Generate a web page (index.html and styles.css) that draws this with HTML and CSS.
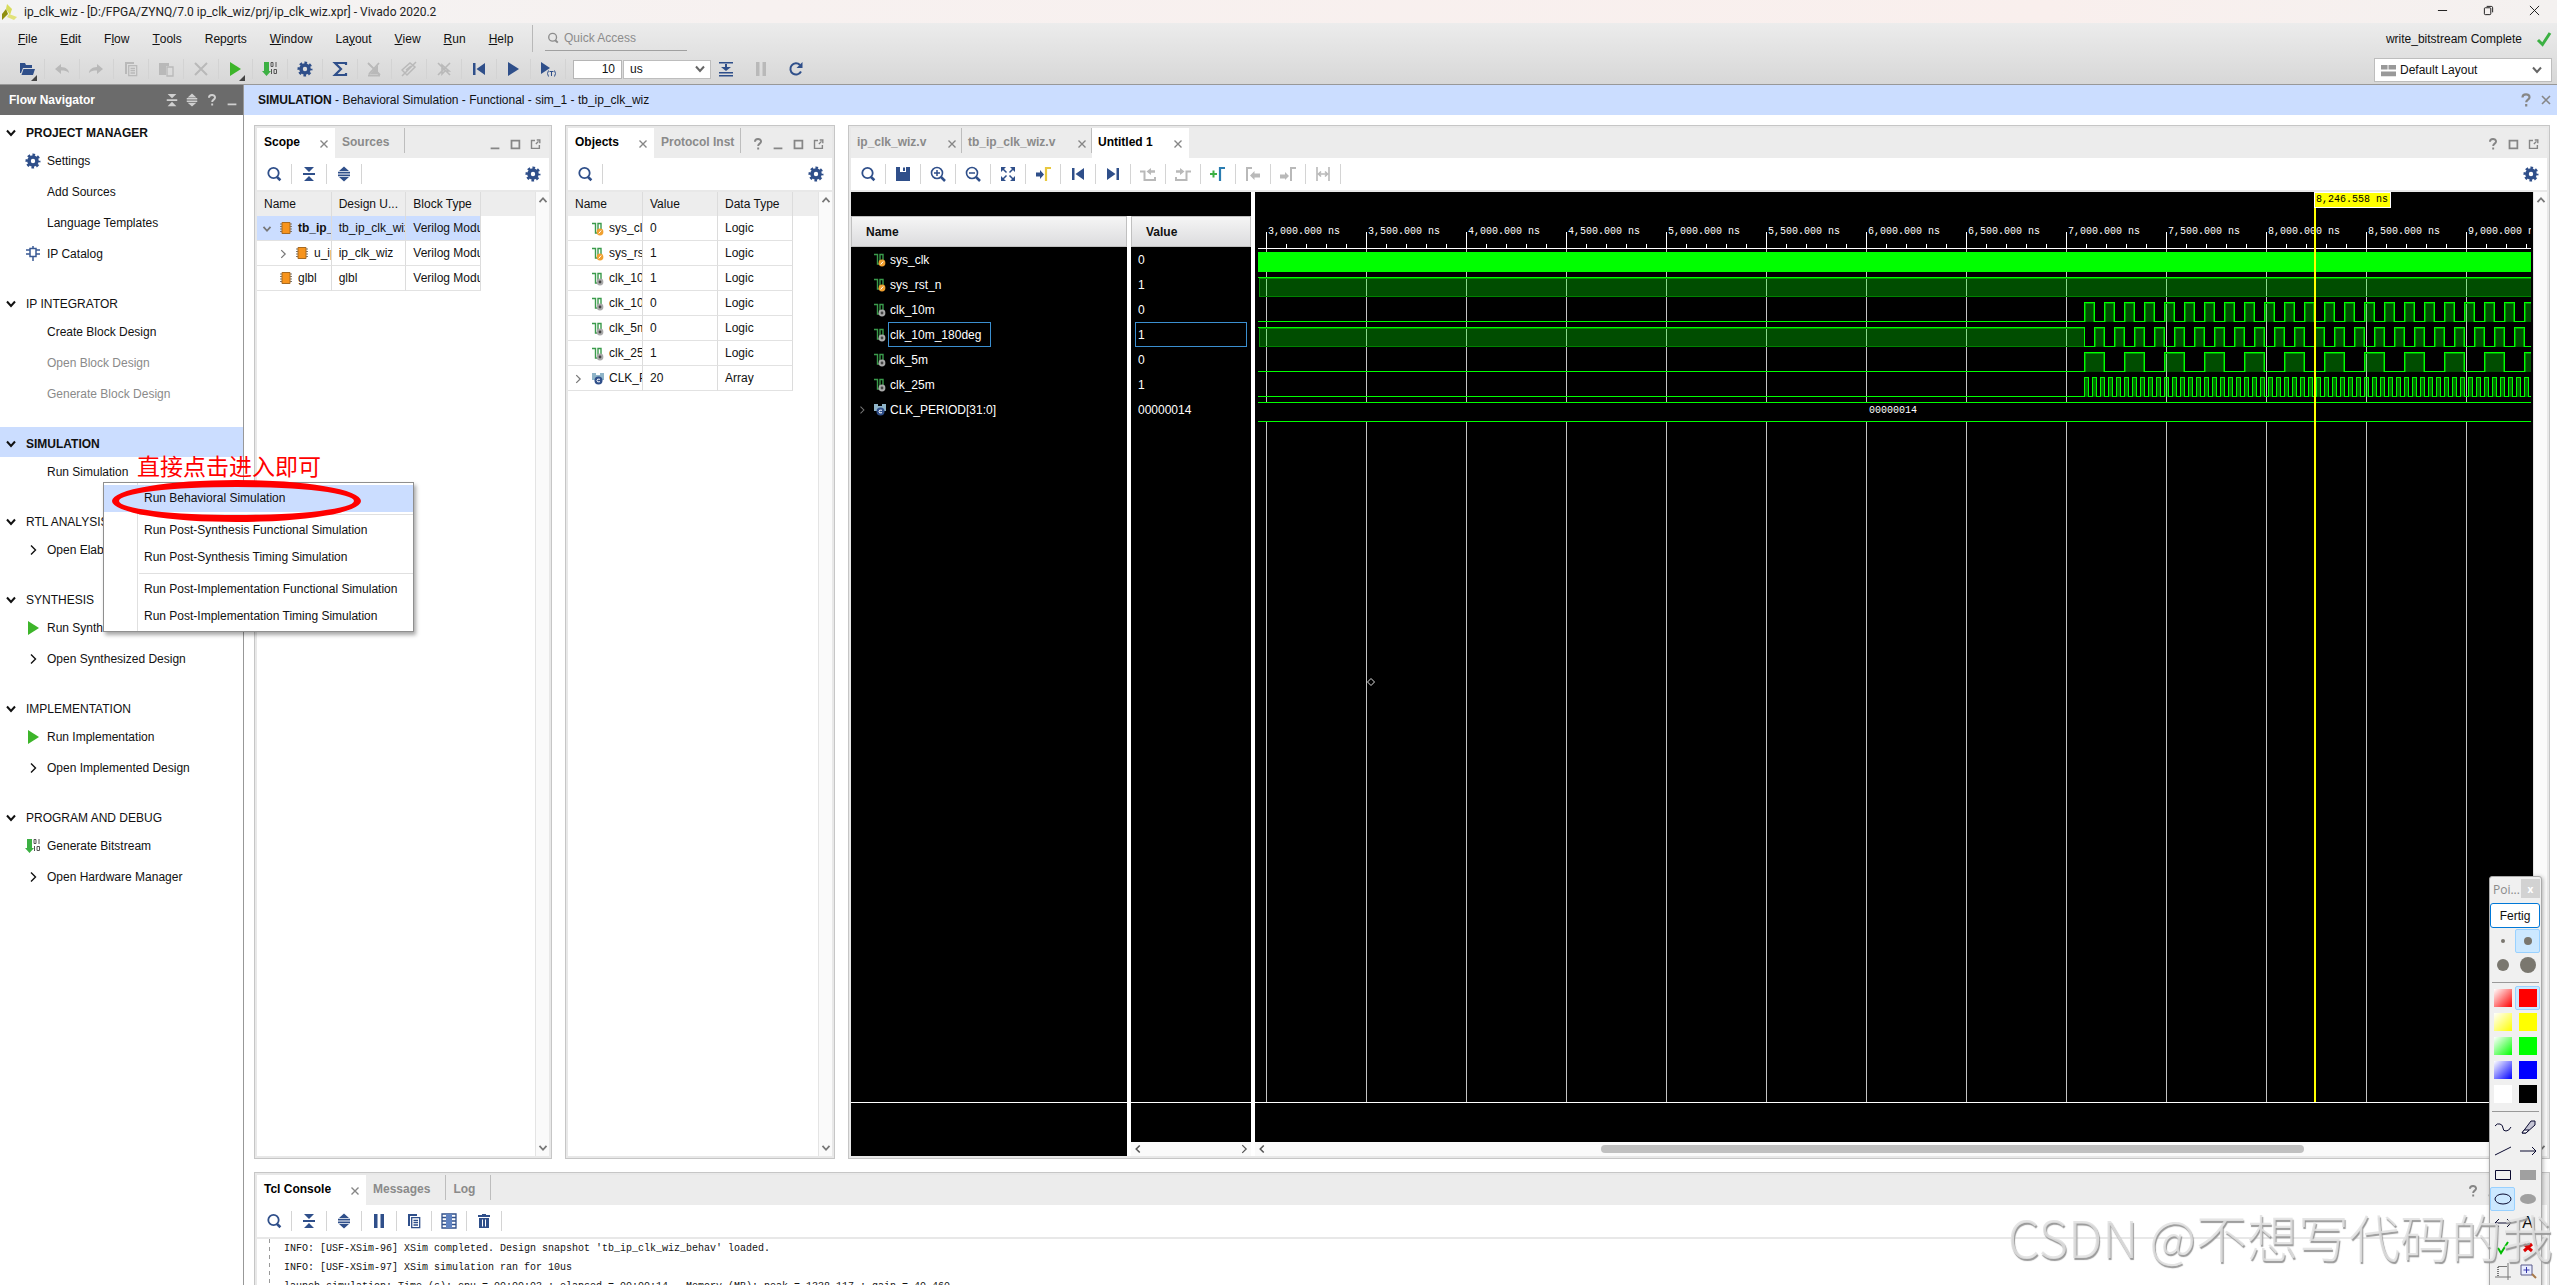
FILE: index.html
```html
<!DOCTYPE html>
<html lang="en">
<head>
<meta charset="utf-8">
<title>ip_clk_wiz - Vivado 2020.2</title>
<link rel="stylesheet" href="styles.css">
</head>
<body>
<svg class="sprite" aria-hidden="true">
  <symbol id="i-search" viewBox="0 0 16 16"><circle cx="7.5" cy="7" r="5.2" fill="none" stroke="currentColor" stroke-width="1.8"/><path d="M11 11l3.4 3.2" stroke="currentColor" stroke-width="2.6"/></symbol>
  <symbol id="i-collapse" viewBox="0 0 16 16"><path d="M3 1h10L8 6zM3 15h10L8 10zM2 7h12v2H2z" fill="currentColor"/></symbol>
  <symbol id="i-expand" viewBox="0 0 16 16"><path d="M3 5h10L8 .5zM3 11h10L8 15.500zM2 5.800h12v1.600H2zM2 8.600h12v1.600H2z" fill="currentColor"/></symbol>
  <symbol id="i-gear" viewBox="0 0 16 16"><circle cx="8" cy="8" r="4" fill="none" stroke="currentColor" stroke-width="3.600"/><circle cx="8" cy="8" r="6.200" fill="none" stroke="currentColor" stroke-width="2.600" stroke-dasharray="2.600 2.270" stroke-dashoffset="1.300"/></symbol>
  <symbol id="i-help" viewBox="0 0 16 16"><path d="M4.500 5.500C4.500 1.300 11.500 1.300 11.500 5.200 11.500 7.600 8.200 7.600 8.200 10.300M8.200 12v2.400" fill="none" stroke="currentColor" stroke-width="2.200"/></symbol>
  <symbol id="i-min" viewBox="0 0 16 16"><path d="M3 12h10v2H3z" fill="currentColor"/></symbol>
  <symbol id="i-max" viewBox="0 0 16 16"><path d="M4 4h9v9H4z" fill="none" stroke="currentColor" stroke-width="2"/></symbol>
  <symbol id="i-pop" viewBox="0 0 16 16"><path d="M8 4H4v9h9V9M9 8l3-3M10 3.500h3.500V7" fill="none" stroke="currentColor" stroke-width="1.600"/></symbol>
  <symbol id="i-x" viewBox="0 0 16 16"><path d="M4 4l8 8M12 4l-8 8" stroke="currentColor" stroke-width="1.600"/></symbol>
  <symbol id="i-down" viewBox="0 0 16 16"><path d="M4 5.500l4 4.500 4-4.500" fill="none" stroke="currentColor" stroke-width="2"/></symbol>
  <symbol id="i-up" viewBox="0 0 16 16"><path d="M4 10.500l4-4.500 4 4.500" fill="none" stroke="currentColor" stroke-width="2"/></symbol>
  <symbol id="i-right" viewBox="0 0 16 16"><path d="M6 3.500l4.500 4.500L6 12.500" fill="none" stroke="currentColor" stroke-width="1.400"/></symbol>
  <symbol id="i-left" viewBox="0 0 16 16"><path d="M10 4L6 8l4 4" fill="none" stroke="currentColor" stroke-width="1.800"/></symbol>
  <symbol id="i-open" viewBox="0 0 16 16"><path d="M1 2h5l1 2h6v3H4L2 12 1 12z" fill="#2f4f8a"/><path d="M4.500 8H16l-2 6H2.500z" fill="#2f4f8a"/></symbol>
  <symbol id="i-undo" viewBox="0 0 16 16"><path d="M1 8l6-5v3c5 0 8 3 8 6-2-2-4-2.500-8-2.500V13z" fill="currentColor"/></symbol>
  <symbol id="i-redo" viewBox="0 0 16 16"><path d="M15 8L9 3v3c-5 0-8 3-8 6 2-2 4-2.500 8-2.500V13z" fill="currentColor"/></symbol>
  <symbol id="i-copy" viewBox="0 0 16 16"><path d="M2 1h9v2H4v10H2z" fill="currentColor"/><path d="M5.700 4.700h8v10h-8zM7.500 7.500h4.500M7.500 9.700h4.500M7.500 12h4.500" fill="none" stroke="currentColor" stroke-width="1.300"/></symbol>
  <symbol id="i-paste" viewBox="0 0 16 16"><path d="M1 2h10v3H8v9H1z" fill="currentColor"/><path d="M9 6h6v9H9z" fill="none" stroke="currentColor" stroke-width="1.300"/></symbol>
  <symbol id="i-cross" viewBox="0 0 16 16"><path d="M2 2l12 12M14 2L2 14" stroke="currentColor" stroke-width="2"/></symbol>
  <symbol id="i-play" viewBox="0 0 16 16"><path d="M3 1l11 7-11 7z" fill="currentColor"/></symbol>
  <symbol id="i-bits" viewBox="0 0 16 16"><path d="M2 1h5v9h2l-4.500 5L0 10h2z" fill="#3cb043"/><path d="M9 1.500h2v4H9zM14 1v5M9.500 8v5M12 8.500h2.500v4H12z" fill="none" stroke="#555"/></symbol>
  <symbol id="i-sigma" viewBox="0 0 16 16"><path d="M14 4V2H3l6 6-6 6h11v-2" fill="none" stroke="currentColor" stroke-width="2.200"/></symbol>
  <symbol id="i-probe" viewBox="0 0 16 16"><path d="M4 13L12 4v9z" fill="currentColor"/><path d="M2 2l12 12M13 2L3 13M2 14.500h12" stroke="currentColor" stroke-width="1.800" fill="none"/></symbol>
  <symbol id="i-clip" viewBox="0 0 16 16"><path d="M1 9l8-7 5 4-8 8zM5 9l5-4M1 15L15 1" stroke="currentColor" stroke-width="1.500" fill="none"/></symbol>
  <symbol id="i-nocur" viewBox="0 0 16 16"><path d="M2 2l12 12M14 2L2 14M6 4v9l3-3h4z" stroke="currentColor" stroke-width="1.600" fill="none"/></symbol>
  <symbol id="i-first" viewBox="0 0 16 16"><path d="M2 2h2.500v12H2zM14 2v12L5.500 8z" fill="currentColor"/></symbol>
  <symbol id="i-last" viewBox="0 0 16 16"><path d="M14 2h-2.500v12H14zM2 2v12l8.500-6z" fill="currentColor"/></symbol>
  <symbol id="i-playt" viewBox="0 0 16 16"><path d="M1 1l9 6-9 6z" fill="currentColor"/><path d="M8.500 9.500q-2 3 0 6M14.500 9.500q2 3 0 6M9.500 10.500h4M11.500 10.500v4.500" fill="none" stroke="currentColor"/></symbol>
  <symbol id="i-step" viewBox="0 0 16 16"><path d="M1 1h14v1.500H1zM1 11h14v1.500H1zM1 14h14v1.500H1zM7 3h2v3h4l-5 4-5-4h4z" fill="currentColor"/></symbol>
  <symbol id="i-pause" viewBox="0 0 16 16"><path d="M3 1h3.500v14H3zM9.500 1H13v14H9.500z" fill="currentColor"/></symbol>
  <symbol id="i-refresh" viewBox="0 0 16 16"><path d="M13 10.500A5.600 5.600 0 1 1 12 4" fill="none" stroke="currentColor" stroke-width="2"/><path d="M14.500 1v6h-6z" fill="currentColor"/></symbol>
  <symbol id="i-layout" viewBox="0 0 16 16"><path d="M0 2h7v5H0zM8 2h8v5H8zM0 9h16v5H0z" fill="#999"/></symbol>
  <symbol id="i-check" viewBox="0 0 16 16"><path d="M2 9l4.500 4.500L14 2" fill="none" stroke="#3cb043" stroke-width="3"/></symbol>
  <symbol id="i-ip" viewBox="0 0 16 16"><path d="M5 2.500h6v8H5zM1 4h4M1 8h4M11 4h4M11 8h4M8 10.500V15M8 0v2" fill="none" stroke="#3a5a94" stroke-width="1.500"/></symbol>
  <symbol id="i-chip" viewBox="0 0 12 12"><path d="M0 2h12M0 4.500h12M0 7h12M0 9.500h12" stroke="#777"/><path d="M2 .5h8v11H2z" fill="#f7941d" stroke="#a86a20"/></symbol>
  <symbol id="i-in" viewBox="0 0 12 14"><path d="M0 1.500h3.500v9.500H6V1.500h3V8" fill="none" stroke="#3a9b4b" stroke-width="1.400"/><circle cx="8" cy="10" r="3.400" fill="#f0a030"/><path d="M6.700 11.500l2.500-3" stroke="#fff"/></symbol>
  <symbol id="i-out" viewBox="0 0 12 14"><path d="M0 1.500h3.500v9.500H6V1.500h3V8" fill="none" stroke="#3a9b4b" stroke-width="1.400"/><circle cx="8" cy="10" r="3.400" fill="#aaa"/><circle cx="8" cy="10" r="1.400" fill="#444"/></symbol>
  <symbol id="i-const" viewBox="0 0 12 14"><path d="M0 1h4v2h4V1h4v7H0z" fill="#8fb4c8"/><circle cx="6.500" cy="8.500" r="4" fill="#2f4f8a"/><path d="M8 7.300q-3-1-3 1.200t3 1.200" fill="none" stroke="#fff"/></symbol>
  <symbol id="i-save" viewBox="0 0 16 16"><path d="M1 1h14v14H1z" fill="#2f4f8a"/><path d="M5 1h6v5H5z" fill="#fff"/><path d="M8 1.500h2V5H8z" fill="#2f4f8a"/></symbol>
  <symbol id="i-zin" viewBox="0 0 16 16"><circle cx="7" cy="7" r="5.500" fill="none" stroke="currentColor" stroke-width="1.600"/><path d="M11 11l4 4" stroke="currentColor" stroke-width="2.500"/><path d="M4 7h6M7 4v6" stroke="currentColor" stroke-width="1.500"/></symbol>
  <symbol id="i-zout" viewBox="0 0 16 16"><circle cx="7" cy="7" r="5.500" fill="none" stroke="currentColor" stroke-width="1.600"/><path d="M11 11l4 4" stroke="currentColor" stroke-width="2.500"/><path d="M4 7h6" stroke="currentColor" stroke-width="1.500"/></symbol>
  <symbol id="i-fit" viewBox="0 0 16 16"><path d="M1 1h5L1 6zM15 1v5l-5-5zM1 15v-5l5 5zM15 15h-5l5-5z" fill="currentColor"/><path d="M3 3l3.500 3.500M13 3L9.500 6.500M3 13l3.500-3.500M13 13L9.500 9.500" stroke="currentColor" stroke-width="1.500"/></symbol>
  <symbol id="i-goto" viewBox="0 0 16 16"><path d="M1 6.500h4V4l4 4.500L5 13v-2.500H1z" fill="#2f4f8a"/><path d="M11 15V2h5" fill="none" stroke="#e8c840" stroke-width="2.200"/></symbol>
  <symbol id="i-prevt" viewBox="0 0 16 16"><path d="M0 5.500h4.500V14H15v-3" fill="none" stroke="currentColor" stroke-width="2"/><path d="M6.500 5.500L11 2v2.200h4v2.600h-4V9z" fill="currentColor"/></symbol>
  <symbol id="i-nextt" viewBox="0 0 16 16"><path d="M16 5.500h-4.500V14H1v-3" fill="none" stroke="currentColor" stroke-width="2"/><path d="M9.500 5.500L5 2v2.200H1v2.600h4V9z" fill="currentColor"/></symbol>
  <symbol id="i-addm" viewBox="0 0 16 16"><path d="M0 8h7M3.500 4.500v7" stroke="#3cb043" stroke-width="2"/><path d="M10 15V2h5" fill="none" stroke="#2a7cb0" stroke-width="2.200"/></symbol>
  <symbol id="i-prevm" viewBox="0 0 16 16"><path d="M2 15V2h5" fill="none" stroke="currentColor" stroke-width="2"/><path d="M5 9.500L9.500 5v2.500H15v4H9.500V14z" fill="currentColor"/></symbol>
  <symbol id="i-nextm" viewBox="0 0 16 16"><path d="M11 15V2h5" fill="none" stroke="currentColor" stroke-width="2"/><path d="M9 10L5 6v2.500H0v4h5V14z" fill="currentColor"/></symbol>
  <symbol id="i-swap" viewBox="0 0 16 16"><path d="M2 1v14M14 1v14M3.500 8h9M6 5.500L3.500 8 6 10.500M10 5.500L12.500 8 10 10.500" fill="none" stroke="currentColor" stroke-width="1.600"/></symbol>
  <symbol id="i-cols" viewBox="0 0 16 16"><path d="M1 1h14v14H1zM1 4.500h14M1 8h14M1 11.500h14" fill="none" stroke="#2f4f8a" stroke-width="1.300"/><path d="M5 1h6v14H5z" fill="#5f82c0"/></symbol>
  <symbol id="i-trash" viewBox="0 0 16 16"><path d="M2 2h12v2H2zM6 1h4v1H6zM3 5h10v10H3z" fill="currentColor"/><path d="M6.500 6.500v7M9.500 6.500v7" stroke="#fff"/></symbol>
</svg>

<div class="app">
  <header class="titlebar">
    <svg class="logo" viewBox="0 0 18 18"><path d="M7 1l5 5-2 6-4-6z" fill="#d8dc5a"/><path d="M6 6l2 5-6 6V11z" fill="#8f8f10"/><path d="M9 11l8 3-3 3-7-3z" fill="#e2e27a"/></svg>
    <span class="title">ip_clk_wiz - [D:/FPGA/ZYNQ/7.0 ip_clk_wiz/prj/ip_clk_wiz.xpr] - Vivado 2020.2</span>
    <div class="winbtns">
      <button aria-label="Minimize"><svg viewBox="0 0 12 12"><path d="M1 6h10" stroke="#111"/></svg></button>
      <button aria-label="Restore"><svg viewBox="0 0 12 12" fill="none" stroke="#111"><rect x="1.500" y="3" width="7" height="7.500" rx="1"/><path d="M4 1.500h5q1.500 0 1.500 1.500v5"/></svg></button>
      <button aria-label="Close"><svg viewBox="0 0 12 12"><path d="M1 1l10 10M11 1L1 11" stroke="#111"/></svg></button>
    </div>
  </header>

  <div class="chrome">
    <div class="chrome-left">
      <div class="menurow">
        <nav class="menubar">
          <button><u>F</u>ile</button><button><u>E</u>dit</button><button>F<u>l</u>ow</button><button><u>T</u>ools</button><button>Rep<u>o</u>rts</button><button><u>W</u>indow</button><button>La<u>y</u>out</button><button><u>V</u>iew</button><button><u>R</u>un</button><button><u>H</u>elp</button>
        </nav>
        <label class="quick"><svg class="ic12"><use href="#i-search"/></svg><input type="text" placeholder="Quick Access" aria-label="Quick Access"></label>
      </div>
      <div class="toolrow">
        <div class="maintools">
          <button aria-label="Open" class="more"><svg><use href="#i-open"/></svg></button>
          <button aria-label="Undo" disabled><svg><use href="#i-undo"/></svg></button>
          <button aria-label="Redo" disabled><svg><use href="#i-redo"/></svg></button>
          <button aria-label="Copy" disabled><svg><use href="#i-copy"/></svg></button>
          <button aria-label="Paste" disabled><svg><use href="#i-paste"/></svg></button>
          <button aria-label="Delete" disabled><svg><use href="#i-cross"/></svg></button>
          <button aria-label="Run" class="more go"><svg><use href="#i-play"/></svg></button>
          <button aria-label="Generate Bitstream"><svg><use href="#i-bits"/></svg></button>
          <button aria-label="Settings"><svg><use href="#i-gear"/></svg></button>
          <button aria-label="Report"><svg><use href="#i-sigma"/></svg></button>
          <button aria-label="Remove probe" disabled><svg><use href="#i-probe"/></svg></button>
          <button aria-label="Detach" disabled><svg><use href="#i-clip"/></svg></button>
          <button aria-label="Clear selection" disabled><svg><use href="#i-nocur"/></svg></button>
          <button aria-label="Restart"><svg><use href="#i-first"/></svg></button>
          <button aria-label="Run all"><svg><use href="#i-play"/></svg></button>
          <button aria-label="Run for time"><svg><use href="#i-playt"/></svg></button>
        </div>
        <input class="timebox" type="text" value="10" aria-label="Run time">
        <div class="selectbox unit"><select aria-label="Time unit"><option>us</option></select><svg><use href="#i-down"/></svg></div>
        <div class="endtools">
          <button aria-label="Step"><svg><use href="#i-step"/></svg></button>
          <button aria-label="Break" disabled><svg><use href="#i-pause"/></svg></button>
          <button aria-label="Relaunch"><svg><use href="#i-refresh"/></svg></button>
        </div>
      </div>
    </div>
    <div class="chrome-right">
      <div class="status">write_bitstream Complete <svg><use href="#i-check"/></svg></div>
      <div class="selectbox layout"><svg class="lead"><use href="#i-layout"/></svg><select aria-label="Layout"><option>Default Layout</option></select><svg><use href="#i-down"/></svg></div>
    </div>
  </div>

  <div class="body">
    <aside class="flow">
      <div class="flowhead"><h2>Flow Navigator</h2><span class="tinybtns">
        <button aria-label="Collapse"><svg><use href="#i-collapse"/></svg></button><button aria-label="Expand"><svg><use href="#i-expand"/></svg></button><button aria-label="Help"><svg><use href="#i-help"/></svg></button><button aria-label="Minimize"><svg><use href="#i-min"/></svg></button></span></div>
      <div class="flowbody">
        <section><h3 class="strong"><svg><use href="#i-down"/></svg>PROJECT MANAGER</h3>
          <button><svg class="blue"><use href="#i-gear"/></svg>Settings</button>
          <button><i></i>Add Sources</button>
          <button><i></i>Language Templates</button>
          <button><svg><use href="#i-ip"/></svg>IP Catalog</button></section>
        <section><h3><svg><use href="#i-down"/></svg>IP INTEGRATOR</h3>
          <button><i></i>Create Block Design</button>
          <button disabled><i></i>Open Block Design</button>
          <button disabled><i></i>Generate Block Design</button></section>
        <section><h3 class="strong current"><svg><use href="#i-down"/></svg>SIMULATION</h3>
          <button><i></i>Run Simulation</button></section>
        <section><h3><svg><use href="#i-down"/></svg>RTL ANALYSIS</h3>
          <button><svg><use href="#i-right"/></svg>Open Elaborated Design</button></section>
        <section><h3><svg><use href="#i-down"/></svg>SYNTHESIS</h3>
          <button><svg class="green"><use href="#i-play"/></svg>Run Synthesis</button>
          <button><svg><use href="#i-right"/></svg>Open Synthesized Design</button></section>
        <section><h3><svg><use href="#i-down"/></svg>IMPLEMENTATION</h3>
          <button><svg class="green"><use href="#i-play"/></svg>Run Implementation</button>
          <button><svg><use href="#i-right"/></svg>Open Implemented Design</button></section>
        <section><h3><svg><use href="#i-down"/></svg>PROGRAM AND DEBUG</h3>
          <button><svg><use href="#i-bits"/></svg>Generate Bitstream</button>
          <button><svg><use href="#i-right"/></svg>Open Hardware Manager</button></section>
      </div>
    </aside>

    <div class="work">
      <div class="workhead"><p><b>SIMULATION</b> - Behavioral Simulation - Functional - sim_1 - tb_ip_clk_wiz</p><span class="tinybtns">
        <button aria-label="Help"><svg><use href="#i-help"/></svg></button><button aria-label="Close"><svg><use href="#i-x"/></svg></button></span></div>
      <main class="panels">
        <div class="toppanels">
          <section class="panel scope">
            <div class="tabs"><button class="tab on">Scope<svg><use href="#i-x"/></svg></button><button class="tab lone">Sources</button>
              <span class="tinybtns"><button aria-label="Minimize"><svg><use href="#i-min"/></svg></button><button aria-label="Maximize"><svg><use href="#i-max"/></svg></button><button aria-label="Float"><svg><use href="#i-pop"/></svg></button></span></div>
            <div class="tools"><button aria-label="Search"><svg><use href="#i-search"/></svg></button><button aria-label="Collapse all"><svg><use href="#i-collapse"/></svg></button><button aria-label="Expand all"><svg><use href="#i-expand"/></svg></button><button class="set" aria-label="Settings"><svg><use href="#i-gear"/></svg></button></div>
            <div class="scroller">
              <div class="sheet"><table class="scopetable">
                <thead><tr><th>Name</th><th>Design U...</th><th>Block Type</th></tr></thead>
                <tbody>
                  <tr class="sel"><td class="tree"><svg class="tw"><use href="#i-down"/></svg><svg class="chip"><use href="#i-chip"/></svg><b>tb_ip_clk_wiz</b></td><td>tb_ip_clk_wiz</td><td>Verilog Module</td></tr>
                  <tr><td class="tree deep"><svg class="tw"><use href="#i-right"/></svg><svg class="chip"><use href="#i-chip"/></svg>u_ip_clk_wiz</td><td>ip_clk_wiz</td><td>Verilog Module</td></tr>
                  <tr><td class="tree"><i class="tw"></i><svg class="chip"><use href="#i-chip"/></svg>glbl</td><td>glbl</td><td>Verilog Module</td></tr>
                </tbody></table></div>
              <div class="vbar"><svg><use href="#i-up"/></svg><svg><use href="#i-down"/></svg></div>
            </div>
          </section>

          <section class="panel objects">
            <div class="tabs"><button class="tab on">Objects<svg><use href="#i-x"/></svg></button><button class="tab tight">Protocol Inst</button>
              <span class="tinybtns"><button aria-label="Help"><svg><use href="#i-help"/></svg></button><button aria-label="Minimize"><svg><use href="#i-min"/></svg></button><button aria-label="Maximize"><svg><use href="#i-max"/></svg></button><button aria-label="Float"><svg><use href="#i-pop"/></svg></button></span></div>
            <div class="tools"><button aria-label="Search"><svg><use href="#i-search"/></svg></button><button class="set" aria-label="Settings"><svg><use href="#i-gear"/></svg></button></div>
            <div class="scroller">
              <div class="sheet"><table class="objtable">
                <thead><tr><th>Name</th><th>Value</th><th>Data Type</th></tr></thead>
                <tbody>
                  <tr><td class="tree"><i class="tw"></i><svg class="sig"><use href="#i-in"/></svg>sys_clk</td><td>0</td><td>Logic</td></tr>
                  <tr><td class="tree"><i class="tw"></i><svg class="sig"><use href="#i-in"/></svg>sys_rst_n</td><td>1</td><td>Logic</td></tr>
                  <tr><td class="tree"><i class="tw"></i><svg class="sig"><use href="#i-out"/></svg>clk_10m</td><td>1</td><td>Logic</td></tr>
                  <tr><td class="tree"><i class="tw"></i><svg class="sig"><use href="#i-out"/></svg>clk_10m_180deg</td><td>0</td><td>Logic</td></tr>
                  <tr><td class="tree"><i class="tw"></i><svg class="sig"><use href="#i-out"/></svg>clk_5m</td><td>0</td><td>Logic</td></tr>
                  <tr><td class="tree"><i class="tw"></i><svg class="sig"><use href="#i-out"/></svg>clk_25m</td><td>1</td><td>Logic</td></tr>
                  <tr><td class="tree"><svg class="tw"><use href="#i-right"/></svg><svg class="sig"><use href="#i-const"/></svg>CLK_PERIOD</td><td>20</td><td>Array</td></tr>
                </tbody></table></div>
              <div class="vbar"><svg><use href="#i-up"/></svg><svg><use href="#i-down"/></svg></div>
            </div>
          </section>

          <section class="panel wave">
            <div class="tabs"><button class="tab file">ip_clk_wiz.v<svg><use href="#i-x"/></svg></button><button class="tab file">tb_ip_clk_wiz.v<svg><use href="#i-x"/></svg></button><button class="tab file on">Untitled 1<svg><use href="#i-x"/></svg></button>
              <span class="tinybtns"><button aria-label="Help"><svg><use href="#i-help"/></svg></button><button aria-label="Maximize"><svg><use href="#i-max"/></svg></button><button aria-label="Float"><svg><use href="#i-pop"/></svg></button></span></div>
            <div class="tools"><button aria-label="Search"><svg><use href="#i-search"/></svg></button><button aria-label="Save"><svg><use href="#i-save"/></svg></button><button aria-label="Zoom in"><svg><use href="#i-zin"/></svg></button><button aria-label="Zoom out"><svg><use href="#i-zout"/></svg></button><button aria-label="Zoom fit"><svg><use href="#i-fit"/></svg></button><button aria-label="Go to cursor"><svg><use href="#i-goto"/></svg></button><button aria-label="First"><svg><use href="#i-first"/></svg></button><button aria-label="Last"><svg><use href="#i-last"/></svg></button><button disabled aria-label="Previous transition"><svg><use href="#i-prevt"/></svg></button><button disabled aria-label="Next transition"><svg><use href="#i-nextt"/></svg></button><button aria-label="Add marker"><svg><use href="#i-addm"/></svg></button><button disabled aria-label="Previous marker"><svg><use href="#i-prevm"/></svg></button><button disabled aria-label="Next marker"><svg><use href="#i-nextm"/></svg></button><button disabled aria-label="Swap cursors"><svg><use href="#i-swap"/></svg></button><button class="set" aria-label="Settings"><svg><use href="#i-gear"/></svg></button></div>
            <div class="wavebody">
              <div class="signals">
                <div class="sigcols">
                  <div class="sigcol names">
                    <h4>Name</h4>
                    <ul>
                      <li><svg class="sig"><use href="#i-in"/></svg><span>sys_clk</span></li>
                      <li><svg class="sig"><use href="#i-in"/></svg><span>sys_rst_n</span></li>
                      <li><svg class="sig"><use href="#i-out"/></svg><span>clk_10m</span></li>
                      <li><svg class="sig"><use href="#i-out"/></svg><span class="picked">clk_10m_180deg</span></li>
                      <li><svg class="sig"><use href="#i-out"/></svg><span>clk_5m</span></li>
                      <li><svg class="sig"><use href="#i-out"/></svg><span>clk_25m</span></li>
                      <li class="bus"><svg class="tw"><use href="#i-right"/></svg><svg class="sig"><use href="#i-const"/></svg><span>CLK_PERIOD[31:0]</span></li>
                    </ul>
                    <div class="under tall"></div>
                  </div>
                  <div class="sigcol values">
                    <h4>Value</h4>
                    <ul><li>0</li><li>1</li><li>0</li><li class="picked">1</li><li>0</li><li>1</li><li>00000014</li></ul>
                    <div class="under"></div>
                    <div class="hbar"><svg><use href="#i-left"/></svg><svg><use href="#i-right"/></svg></div>
                  </div>
                </div>
              </div>
              <div class="plotcol">
                <svg class="plot" shape-rendering="crispEdges">
                  <defs>
                    <pattern id="grid" patternUnits="userSpaceOnUse" x="11" y="0" width="100" height="100"><rect width="1" height="100" fill="#c4c4c4"/></pattern>
                    <pattern id="major" patternUnits="userSpaceOnUse" x="11" y="40" width="100" height="20"><rect width="1" height="20" fill="#fff"/></pattern>
                    <pattern id="minor" patternUnits="userSpaceOnUse" x="11" y="52" width="20" height="10"><rect width="1" height="10" fill="#fff"/></pattern>
                    <pattern id="c10" patternUnits="userSpaceOnUse" x="829" y="110" width="20" height="20"><path d="M0 0h11v20H0z" fill="#0f0" fill-opacity=".3"/><path d="M1 1h9v1H1zM9 2h1v18H9zM1 2h1v18H1z" fill="#090"/><path d="M0 0h11v1H0zM0 0h1v20H0zM10 0h1v20h-1zM10 19h10v1H10z" fill="#0f0"/></pattern>
                    <pattern id="c10b" patternUnits="userSpaceOnUse" x="839" y="135" width="20" height="20"><path d="M0 0h11v20H0z" fill="#0f0" fill-opacity=".3"/><path d="M1 1h9v1H1zM9 2h1v18H9zM1 2h1v18H1z" fill="#090"/><path d="M0 0h11v1H0zM0 0h1v20H0zM10 0h1v20h-1zM10 19h10v1H10z" fill="#0f0"/></pattern>
                    <pattern id="c5" patternUnits="userSpaceOnUse" x="829" y="160" width="40" height="20"><path d="M0 0h21v20H0z" fill="#0f0" fill-opacity=".3"/><path d="M1 1h19v1H1zM19 2h1v18h-1zM1 2h1v18H1z" fill="#090"/><path d="M0 0h21v1H0zM0 0h1v20H0zM20 0h1v20h-1zM20 19h20v1H20z" fill="#0f0"/></pattern>
                    <pattern id="c25" patternUnits="userSpaceOnUse" x="829" y="185" width="8" height="20"><path d="M0 0h5v20H0z" fill="#0f0" fill-opacity=".4"/><path d="M0 0h5v1H0zM0 0h1v20H0zM4 0h1v20H4zM4 19h4v1H4z" fill="#0f0"/></pattern>
                  </defs>
                  <rect class="gridarea" x="11" y="56" width="100%" fill="url(#grid)"/>
                  <rect x="3" y="40" width="100%" height="16" fill="url(#major)"/>
                  <rect x="3" y="52" width="100%" height="4" fill="url(#minor)"/>
                  <rect x="3" y="56" width="100%" height="1" fill="#fff"/>
                  <g class="ticks"><text x="13" y="42">3,000.000 ns</text><text x="113" y="42">3,500.000 ns</text><text x="213" y="42">4,000.000 ns</text><text x="313" y="42">4,500.000 ns</text><text x="413" y="42">5,000.000 ns</text><text x="513" y="42">5,500.000 ns</text><text x="613" y="42">6,000.000 ns</text><text x="713" y="42">6,500.000 ns</text><text x="813" y="42">7,000.000 ns</text><text x="913" y="42">7,500.000 ns</text><text x="1013" y="42">8,000.000 ns</text><text x="1113" y="42">8,500.000 ns</text><text x="1213" y="42">9,000.000 ns</text></g>
                  <rect x="3" y="60" width="100%" height="20" fill="#0f0"/>
                  <rect x="4" y="85" width="100%" height="20" fill="#0f0" fill-opacity=".3"/>
                  <rect x="4" y="104" width="100%" height="1" fill="#008000"/><rect x="4" y="86" width="100%" height="1" fill="#009000"/><rect x="4" y="86" width="1" height="19" fill="#009000"/>
                  <rect x="3" y="85" width="100%" height="1" fill="#0f0"/>
                  <rect x="3" y="129" width="826" height="1" fill="#0f0"/>
                  <rect x="829" y="110" width="100%" height="20" fill="url(#c10)"/>
                  <rect x="4" y="135" width="825" height="20" fill="#0f0" fill-opacity=".3"/>
                  <rect x="4" y="154" width="825" height="1" fill="#008000"/><rect x="4" y="136" width="825" height="1" fill="#009000"/><rect x="4" y="136" width="1" height="19" fill="#009000"/>
                  <rect x="3" y="135" width="827" height="1" fill="#0f0"/>
                  <rect x="829" y="135" width="100%" height="20" fill="url(#c10b)"/>
                  <rect x="3" y="179" width="826" height="1" fill="#0f0"/>
                  <rect x="829" y="160" width="100%" height="20" fill="url(#c5)"/>
                  <rect x="3" y="204" width="826" height="1" fill="#0f0"/>
                  <rect x="829" y="185" width="100%" height="20" fill="url(#c25)"/>
                  <rect x="3" y="210" width="100%" height="20" fill="#000"/>
                  <rect x="3" y="210" width="100%" height="1" fill="#0f0"/><rect x="3" y="229" width="100%" height="1" fill="#0f0"/>
                  <g class="ticks"><text x="614" y="221">00000014</text></g>
                  <rect class="base" x="0" width="100%" height="1" fill="#fff"/>
                  <path d="M116 486.500l3.500 3.500-3.500 3.500-3.500-3.500z" fill="none" stroke="#ddd" shape-rendering="auto"/>
                  <rect class="cursorline" x="1059" y="0" width="2" fill="#ff0"/>
                  <rect x="1059" y="0" width="77" height="16" fill="#fff"/><rect x="1060" y="1" width="75" height="14" fill="#ff0"/>
                  <text class="cursortext" x="1061" y="10">8,246.558 ns</text>
                </svg>
                <div class="hbar"><svg><use href="#i-left"/></svg><span class="thumb"></span><svg><use href="#i-right"/></svg></div>
              </div>
              <div class="vbar"><svg><use href="#i-up"/></svg><svg><use href="#i-down"/></svg></div>
            </div>
          </section>
        </div>

        <section class="panel console">
          <div class="tabs"><button class="tab on tcl">Tcl Console<svg><use href="#i-x"/></svg></button><button class="tab">Messages</button><button class="tab">Log</button>
            <span class="tinybtns"><button aria-label="Help"><svg><use href="#i-help"/></svg></button><button aria-label="Minimize"><svg><use href="#i-min"/></svg></button><button aria-label="Maximize"><svg><use href="#i-max"/></svg></button><button aria-label="Float"><svg><use href="#i-pop"/></svg></button></span></div>
          <div class="tools"><button aria-label="Search"><svg><use href="#i-search"/></svg></button><button aria-label="Collapse all"><svg><use href="#i-collapse"/></svg></button><button aria-label="Expand all"><svg><use href="#i-expand"/></svg></button><button aria-label="Pause output"><svg><use href="#i-pause"/></svg></button><button aria-label="Copy"><svg><use href="#i-copy"/></svg></button><button aria-label="Columns"><svg><use href="#i-cols"/></svg></button><button aria-label="Clear"><svg><use href="#i-trash"/></svg></button></div>
          <div class="log">
            <p>INFO: [USF-XSim-96] XSim completed. Design snapshot 'tb_ip_clk_wiz_behav' loaded.</p>
            <p>INFO: [USF-XSim-97] XSim simulation ran for 10us</p>
            <p>launch_simulation: Time (s): cpu = 00:00:03 ; elapsed = 00:00:14 . Memory (MB): peak = 1338.117 ; gain = 40.460</p>
          </div>
        </section>
      </main>
    </div>
  </div>

  <div class="popup" role="menu">
    <button class="hot" role="menuitem">Run Behavioral Simulation</button>
    <hr>
    <button role="menuitem">Run Post-Synthesis Functional Simulation</button>
    <button role="menuitem">Run Post-Synthesis Timing Simulation</button>
    <hr>
    <button role="menuitem">Run Post-Implementation Functional Simulation</button>
    <button role="menuitem">Run Post-Implementation Timing Simulation</button>
  </div>
  <p class="note" lang="zh">直接点击进入即可</p>
  <div class="ring"></div>

  <div class="palette">
    <div class="ptitle"><span>Poi...</span><button aria-label="Close">x</button></div>
    <button class="done">Fertig</button>
    <div class="pgrid">
      <button aria-label="Tiny"><svg viewBox="0 0 24 24"><circle cx="12" cy="12" r="2"/></svg></button><button class="lit" aria-label="Small"><svg viewBox="0 0 24 24"><circle cx="12" cy="12" r="4"/></svg></button>
      <button aria-label="Medium"><svg viewBox="0 0 24 24"><circle cx="12" cy="12" r="6"/></svg></button><button aria-label="Large"><svg viewBox="0 0 24 24"><circle cx="12" cy="12" r="8"/></svg></button>
    </div>
    <hr>
    <div class="pgrid">
      <button aria-label="Light red"><i class="sw r1"></i></button><button class="lit" aria-label="Red"><i class="sw r2"></i></button>
      <button aria-label="Light yellow"><i class="sw y1"></i></button><button aria-label="Yellow"><i class="sw y2"></i></button>
      <button aria-label="Light green"><i class="sw g1"></i></button><button aria-label="Green"><i class="sw g2"></i></button>
      <button aria-label="Light blue"><i class="sw b1"></i></button><button aria-label="Blue"><i class="sw b2"></i></button>
      <button aria-label="White"><i class="sw w1"></i></button><button aria-label="Black"><i class="sw w2"></i></button>
    </div>
    <hr>
    <div class="pgrid shapes">
      <button aria-label="Freehand"><svg viewBox="0 0 24 24"><path d="M4 11q2-3 5-2t3 4 3 3 5-4"/></svg></button><button aria-label="Eraser"><svg viewBox="0 0 24 24"><path d="M6 18l9-12h4v4l-9 8z" fill="#c4c4d4"/><path d="M6 18l2-3h5l-3 3z" fill="#fff"/></svg></button>
      <button aria-label="Line"><svg viewBox="0 0 24 24"><path d="M4 16l16-8"/></svg></button><button aria-label="Arrow"><svg viewBox="0 0 24 24"><path d="M4 12h16M16 8l4 4-4 4"/></svg></button>
      <button aria-label="Rectangle"><svg viewBox="0 0 24 24"><path d="M4.500 7.500h15v9h-15z"/></svg></button><button aria-label="Filled rectangle"><svg viewBox="0 0 24 24"><path d="M4 7h16v10H4z" fill="#a0a0a0" stroke="none"/></svg></button>
      <button class="lit" aria-label="Ellipse"><svg viewBox="0 0 24 24"><ellipse cx="12" cy="12" rx="8" ry="5"/></svg></button><button aria-label="Filled ellipse"><svg viewBox="0 0 24 24"><ellipse cx="12" cy="12" rx="8" ry="5" fill="#a0a0a0" stroke="none"/></svg></button>
      <button aria-label="Double arrow"><svg viewBox="0 0 24 24"><path d="M4 12h16M8 8l-4 4 4 4M16 8l4 4-4 4"/></svg></button><button class="letter">A</button>
      <button aria-label="Tick"><svg viewBox="0 0 24 24"><path d="M7 13l3 5 7-11" stroke="#0b0" stroke-width="2"/></svg></button><button aria-label="Cross"><svg viewBox="0 0 24 24"><path d="M8 9l8 7M16 9l-8 7" stroke="#d00" stroke-width="3"/></svg></button>
      <button aria-label="Crop"><svg viewBox="0 0 24 24"><path d="M4 18h16M17 4v17" stroke="#777"/><path d="M7 17V7.500h9" stroke="#000" stroke-dasharray="1 1"/></svg></button><button aria-label="Magnify"><svg viewBox="0 0 24 24"><path d="M5 6h11v10H5z" fill="#e8ecff" stroke="#5a5a8a"/><path d="M10.500 8v6M7.500 11h6" stroke="#33a"/><path d="M16 15l4 4" stroke="#a87848" stroke-width="2"/></svg></button>
    </div>
  </div>
  <p class="watermark" lang="zh">CSDN @不想写代码的我</p>
</div>
</body>
</html>
```
FILE: styles.css
```css
* { box-sizing: border-box; }
body, h2, h3, h4, p, ul { margin: 0; padding: 0; }
h2, h3, h4 { font-size: 12px; }
body { font: 12px/16px "Liberation Sans", Arial, sans-serif; color: #111; background: #fff; }
button, input, select { font: inherit; color: inherit; border: 0; background: none; padding: 0; margin: 0; border-radius: 0; }
button { cursor: default; display: inline-flex; align-items: center; justify-content: center; white-space: nowrap; }
svg { width: 16px; height: 16px; flex: none; display: block; }
ul { list-style: none; }
hr { border: 0; margin: 0; }
.sprite { position: absolute; width: 0; height: 0; }
.app { position: relative; height: 100vh; display: flex; flex-direction: column; overflow: hidden; }

/* Window title */
.titlebar { height: 23px; display: flex; align-items: center; background: linear-gradient(90deg, #f3f3f3, #f7f1f0 30%, #f9efed 80%, #f4f1f0); font-family: Roboto, "Noto Sans", sans-serif; }
.logo { width: 18px; height: 18px; }
.title { margin-left: 6px; flex: 1; white-space: nowrap; color: #222; }
.winbtns { display: flex; padding-bottom: 2px; }
.winbtns button { width: 46px; height: 20px; }
.winbtns svg { width: 11px; height: 11px; }

/* Menu and main toolbar */
.chrome { height: 62px; display: flex; justify-content: space-between; background: linear-gradient(#ececec, #d7d7d7); border-bottom: 1px solid #989898; }
.menurow { display: flex; height: 31px; align-items: center; padding-left: 6px; }
.menubar { display: flex; height: 27px; align-items: center; border-right: 1px solid #b8b8b8; padding-right: 0; }
.menubar button { padding: 0 11px 0 12px; height: 26px; }
.quick { display: flex; align-items: center; gap: 5px; height: 25px; width: 142px; margin-left: 12px; padding-left: 2px; border-bottom: 1px solid #a0a0a0; color: #8c8c8c; }
.quick input { width: 100px; outline: 0; }
.quick input::placeholder { color: #8c8c8c; opacity: 1; }
.menubar { width: 527px; }
.ic12 { width: 12px; height: 12px; }
.toolrow { display: flex; align-items: center; height: 30px; padding-left: 10px; }
.maintools { display: flex; width: 556px; }
.maintools button { flex: 1; height: 20px; position: relative; color: #2f4f8a; border-right: 1px solid #d3d3d3; }
.maintools button:disabled, .endtools button:disabled, .tools button:disabled { color: #b9b9b9; }
.maintools .go { color: #3db52a; }
.more::after { content: ""; position: absolute; right: 7px; bottom: -2px; border: 3px solid #444; border-top-color: transparent; border-left-color: transparent; }
.timebox { width: 49px; height: 19px; margin-left: 7px; background: #fff; border: 1px solid #b5b5b5; text-align: right; padding-right: 6px; }
.selectbox { display: flex; align-items: center; background: #fff; border: 1px solid #bdbdbd; color: #666; }
.selectbox select { appearance: none; flex: 1; color: #111; outline: 0; }
.unit { width: 88px; height: 19px; margin-left: 1px; padding: 0 2px 0 6px; }
.endtools { display: flex; margin-left: -3px; }
.endtools button { width: 35px; height: 20px; color: #2f4f8a; }
.chrome-right { padding-right: 5px; display: flex; flex-direction: column; align-items: flex-end; }
.status { display: flex; align-items: center; gap: 14px; height: 32px; }
.layout { width: 178px; height: 24px; margin-top: 3px; padding: 0 6px; }
.layout select { margin-left: 4px; }
.lead { width: 15px; height: 15px; }

.body { flex: 1; display: flex; min-height: 0; }

/* Flow navigator */
.flow { width: 244px; border-right: 1px solid #989898; display: flex; flex-direction: column; }
.flowhead { height: 30px; background: #6b6b6b; color: #fff; display: flex; align-items: center; justify-content: space-between; padding: 0 1px 0 9px; }
.flowhead .tinybtns { color: #d0d0d0; }
.tinybtns { display: flex; color: #868686; }
.tinybtns button { width: 20px; height: 20px; }
.tinybtns svg { width: 14px; height: 14px; }
.flowbody { padding-top: 1px; }
.flowbody section { margin-bottom: 17px; display: flex; flex-direction: column; }
.flowbody h3 { height: 30px; display: flex; align-items: center; gap: 7px; padding: 3px 0 0 3px; font-weight: 400; }
.flowbody h3.strong { font-weight: 700; }
.flowbody h3.current { background: #cbddff; }
.flowbody section > button { height: 31px; justify-content: flex-start; gap: 6px; padding: 0 0 2px 25px; }
.flowbody section > button > i { width: 16px; }
.flowbody button:disabled { color: #8a8a8a; }
.blue { color: #2f4f8a; }
.green { color: #3db52a; }

/* Work area */
.work { flex: 1; min-width: 0; display: flex; flex-direction: column; }
.workhead { height: 30px; background: #cbddff; display: flex; align-items: center; justify-content: space-between; padding: 0 1px 0 14px; }
.workhead .tinybtns svg { width: 16px; height: 16px; }
.panels { flex: 1; min-height: 0; display: flex; flex-direction: column; gap: 13px; padding: 10px 7px 0 10px; }
.toppanels { flex: 1; min-height: 0; display: flex; gap: 13px; }
.panel { border: 1px solid #c6c6c6; background: #e8e8e8; padding: 2px; display: flex; flex-direction: column; min-width: 0; }
.scope { width: 298px; }
.objects { width: 270px; }
.wave { flex: 1; }
.console { height: 113px; border-bottom: 0; padding-bottom: 0; }
.tabs { height: 30px; display: flex; background: #ececec; align-items: flex-start; }
.tab { height: 25px; padding: 2px 15px 0 7px; font-weight: 700; color: #8a8a8a; border-right: 1px solid #bdbdbd; justify-content: space-between; }
.tab.on { height: 30px; padding: 0 4px 3px 7px; background: #fff; color: #000; border-right: 0; }
.tab svg { width: 14px; height: 14px; margin: 4px 0 0; color: #868686; }
.tab.tight { padding-right: 6px; }
.scope .tab.on { width: 78px; }
.objects .tab.on { width: 86px; }
.tab.file { padding: 2px 2px 0 6px; width: 130px; }
.tab.file:first-child { width: 111px; }
.tab.file.on { padding: 0 4px 3px 6px; width: 97px; }
.tab.tcl { width: 109px; }
.tabs .tinybtns { margin: 6px 4px 0 auto; }
.tools { height: 34px; display: flex; align-items: center; background: #fff; border-bottom: 2px solid #e8e8e8; }
.tools button { width: 35px; height: 20px; color: #2f4f8a; border-right: 1px solid #d4d4d4; }
.tools svg { width: 16px; height: 16px; }
.tools .set { margin-left: auto; border: 0; margin-right: -1px; }

.scroller { flex: 1; display: flex; background: #fff; min-height: 0; }
.sheet { flex: 1; background: linear-gradient(#ededed 24px, #fff 24px); min-width: 0; }
.vbar { width: 14px; border-left: 1px solid #e4e4e4; background: #fafafa; display: flex; flex-direction: column; justify-content: space-between; align-items: center; color: #777; }
.vbar svg { width: 14px; height: 16px; }
table { border-collapse: separate; border-spacing: 0; table-layout: fixed; width: 225px; }
.scopetable { width: 224px; }
th, td { padding: 0 0 0 7px; text-align: left; font-weight: 400; white-space: nowrap; overflow: hidden; border-right: 1px solid #dcdcdc; }
th { height: 24px; }
td { height: 25px; border-bottom: 1px solid #e2e2e2; }
.sel td { background: #cbddff; }
td.tree { padding-left: 2px; }
.tree > * { display: inline-block; vertical-align: middle; }
.tree b { vertical-align: baseline; }
.tw { width: 16px; height: 14px; color: #777; }
.chip { width: 12px; height: 12px; margin: 0 6px 2px 5px; }
td.deep { padding-left: 18px; }
.sig { width: 12px; height: 14px; margin: 0 5px 0 6px; }

/* Waveform */
.wavebody { flex: 1; display: flex; background: #fff; min-height: 0; }
.signals { width: 400px; padding-top: 24px; background: #000; display: flex; }
.sigcols { flex: 1; display: flex; gap: 4px; background: #fff; }
.sigcol { background: #000; color: #fff; display: flex; flex-direction: column; }
.names { width: 276px; }
.values { width: 120px; }
.sigcol h4 { height: 31px; padding: 7px 14px 0; background: linear-gradient(#f5f5f5, #dcdcde); color: #111; border: 1px solid #c0c0c0; }
.sigcol ul { flex: 1; }
.sigcol li { height: 25px; display: flex; align-items: center; }
.names li { padding-left: 17px; }
.names li.bus { padding-left: 5px; }
.names .tw { width: 12px; }
.names span { padding: 0 9px 0 1px; height: 25px; line-height: 24px; border: 1px solid transparent; margin-left: -3px; }
.values li { padding-left: 2px; margin: 0 4px; border: 1px solid transparent; }
.names .picked, .values .picked { border-color: #3b8fd0; }
.under { height: 40px; border-top: 1px solid #fff; }
.under.tall { height: 54px; }
.plotcol { flex: 1; min-width: 0; margin-left: 4px; display: flex; flex-direction: column; background: #000; }
.plot { flex: 1; width: 100%; height: auto; min-height: 0; padding-right: 2px; overflow: hidden; }
.gridarea { height: calc(100% - 96px); }
.cursorline { height: calc(100% - 40px); }
.base { y: calc(100% - 40px); }
.ticks, .cursortext { font: 10px "Liberation Mono", monospace; fill: #fff; }
.cursortext { fill: #000; }
.hbar { height: 14px; background: #fafafa; display: flex; align-items: center; justify-content: space-between; color: #555; }
.hbar svg { width: 14px; height: 14px; }
.thumb { height: 8px; width: 55%; margin: 0 auto 0 26%; border-radius: 4px; background: #c0c0c0; }

/* Console */
.log { flex: 1; background: #fff; overflow: hidden; padding-left: 27px; font: 10px/19px "Liberation Mono", monospace; background-image: repeating-linear-gradient(#999 0 4px, #fff 4px 8px); background-size: 1px 100%; background-position: 12px 0; background-repeat: no-repeat; }
.log p { white-space: pre; }

/* Run Simulation menu */
.popup { position: absolute; left: 103px; top: 482px; width: 311px; border: 1px solid #8f8f8f; padding: 2px 0 1px; display: flex; flex-direction: column; background: linear-gradient(#e0e0e0, #e0e0e0) 33px 0 / 1px 100% no-repeat #fff; box-shadow: 2px 3px 4px rgba(0, 0, 0, .35); }
.popup button { height: 27px; justify-content: flex-start; padding: 0 0 2px 40px; }
.popup .hot { background: #cbddff; }
.popup hr { height: 5px; margin-left: 35px; background: linear-gradient(#e0e0e0, #e0e0e0) 0 2px / 100% 1px no-repeat; }
.note { position: absolute; left: 137px; top: 449px; font: 23px/32px "Noto Sans CJK SC", sans-serif; color: #f00; white-space: nowrap; }
.ring { position: absolute; left: 112px; top: 480px; width: 249px; height: 42px; border: 7px solid #f00; border-radius: 50%; }

/* Annotation palette */
.palette { position: absolute; left: calc(100% - 68px); top: 876px; width: 53px; height: 440px; background: #f0f0f0; border: 1px solid #aaa; border-radius: 3px; padding: 2px 0; box-shadow: 1px 1px 4px rgba(0, 0, 0, .3); }
.ptitle { display: flex; justify-content: space-between; height: 24px; padding: 0 1px 0 3px; color: #8a8a8a; font-family: "Open Sans", sans-serif; line-height: 22px; }
.ptitle button { width: 19px; height: 19px; background: #d2d2d2; color: #fff; font-weight: 700; font-size: 10px; }
.done { width: 50px; height: 25px; border: 1px solid #0078d7; border-radius: 3px; background: #fff; display: flex; }
.pgrid { display: grid; grid-template-columns: 25px 25px; grid-auto-rows: 24px; padding-top: 1px; }
.pgrid svg { width: 24px; height: 24px; fill: #7a776f; }
.pgrid .lit { background: #cce8ff; border: 1px solid #99d1ff; border-radius: 2px; }
.pgrid.shapes svg { fill: none; stroke: #0a0a30; }
.palette hr { height: 6px; border-bottom: 1px solid #999; margin: 0 2px 2px; }
.sw { width: 18px; height: 18px; }
.r1 { background: linear-gradient(135deg, #fff, #f00); } .r2 { background: #f00; }
.y1 { background: linear-gradient(135deg, #fff, #ff0); } .y2 { background: #ff0; }
.g1 { background: linear-gradient(135deg, #fff, #0f0); } .g2 { background: #0f0; }
.b1 { background: linear-gradient(135deg, #fff, #00f); } .b2 { background: #00f; }
.w1 { background: #fff; } .w2 { background: #000; }
.letter { font-size: 16px; }
.watermark { position: absolute; right: 4px; top: 1199px; font: 300 51px/74px "Noto Sans CJK SC", sans-serif; color: rgba(225, 225, 225, .85); text-shadow: 1px 2px 1px #999; white-space: nowrap; }
```
